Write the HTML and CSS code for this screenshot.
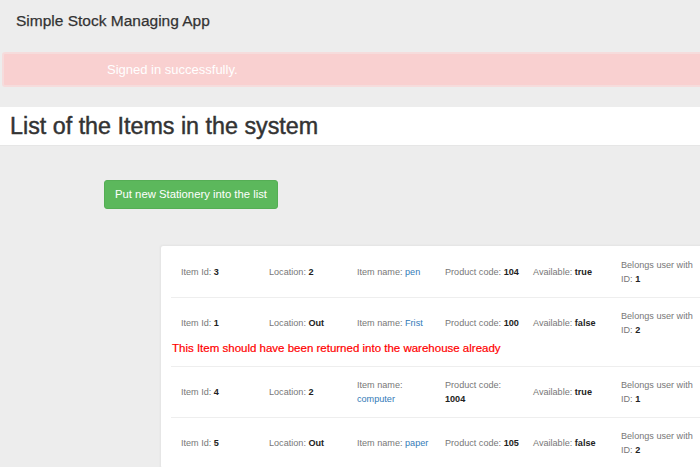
FILE: index.html
```html
<!DOCTYPE html>
<html>
<head>
<meta charset="utf-8">
<title>Simple Stock Managing App</title>
<link rel="stylesheet" href="styles.css">
</head>
<body>
<nav class="navbar"><span class="brand">Simple Stock Managing App</span></nav>
<div class="alert">Signed in successfully.</div>
<div class="title-band"><h1>List of the Items in the system</h1></div>
<div class="actions"><a class="btn">Put new Stationery into the list</a></div>
<div class="card">
  <div class="row">
    <div class="cells">
      <div class="cell"><span class="lbl">Item Id:</span> <b>3</b></div>
      <div class="cell"><span class="lbl">Location:</span> <b>2</b></div>
      <div class="cell"><span class="lbl">Item name:</span> <a class="link">pen</a></div>
      <div class="cell"><span class="lbl">Product code:</span> <b>104</b></div>
      <div class="cell"><span class="lbl">Available:</span> <b>true</b></div>
      <div class="cell"><span class="lbl">Belongs user with</span> <span class="lbl">ID:</span> <b>1</b></div>
    </div>
  </div>
  <div class="row">
    <div class="cells">
      <div class="cell"><span class="lbl">Item Id:</span> <b>1</b></div>
      <div class="cell"><span class="lbl">Location:</span> <b>Out</b></div>
      <div class="cell"><span class="lbl">Item name:</span> <a class="link">Frist</a></div>
      <div class="cell"><span class="lbl">Product code:</span> <b>100</b></div>
      <div class="cell"><span class="lbl">Available:</span> <b>false</b></div>
      <div class="cell"><span class="lbl">Belongs user with</span> <span class="lbl">ID:</span> <b>2</b></div>
    </div>
    <p class="warn">This Item should have been returned into the warehouse already</p>
  </div>
  <div class="row">
    <div class="cells">
      <div class="cell"><span class="lbl">Item Id:</span> <b>4</b></div>
      <div class="cell"><span class="lbl">Location:</span> <b>2</b></div>
      <div class="cell"><span class="lbl">Item name:</span> <a class="link">computer</a></div>
      <div class="cell"><span class="lbl">Product code:</span> <b>1004</b></div>
      <div class="cell"><span class="lbl">Available:</span> <b>true</b></div>
      <div class="cell"><span class="lbl">Belongs user with</span> <span class="lbl">ID:</span> <b>1</b></div>
    </div>
  </div>
  <div class="row">
    <div class="cells">
      <div class="cell"><span class="lbl">Item Id:</span> <b>5</b></div>
      <div class="cell"><span class="lbl">Location:</span> <b>Out</b></div>
      <div class="cell"><span class="lbl">Item name:</span> <a class="link">paper</a></div>
      <div class="cell"><span class="lbl">Product code:</span> <b>105</b></div>
      <div class="cell"><span class="lbl">Available:</span> <b>false</b></div>
      <div class="cell"><span class="lbl">Belongs user with</span> <span class="lbl">ID:</span> <b>2</b></div>
    </div>
  </div>
</div>
</body>
</html>
```
FILE: styles.css
```css
html, body {
  margin: 0;
  padding: 0;
  background: #ededed;
  font-family: "Liberation Sans", Arial, sans-serif;
  color: #333;
  overflow: hidden;
  height: 467px;
}
.navbar {
  height: 42px;
  display: flex;
  align-items: center;
  padding-left: 16px;
}
.brand {
  font-size: 15.5px;
  color: #333;
  -webkit-text-stroke: 0.25px #333;
}
.alert {
  margin: 10px -20px 0 2px;
  height: 31px;
  border: 2px solid #f6dcdc;
  border-radius: 3px;
  background: #f9d0d0;
  color: #ffffff;
  font-size: 13px;
  display: flex;
  align-items: center;
  padding-left: 103px;
}
.title-band {
  margin-top: 20px;
  background: #fff;
  height: 38px;
  display: flex;
  align-items: center;
  border-bottom: 1px solid #e6e6e6;
}
h1 {
  margin: 0 0 0 10px;
  font-size: 23.3px;
  font-weight: 500;
  color: #333;
  -webkit-text-stroke: 0.45px #333;
}
.actions {
  padding: 34px 0 0 104px;
}
.btn {
  display: inline-block;
  background: #5cb85c;
  border: 1px solid #55ae55;
  border-radius: 3px;
  color: #fff;
  font-size: 11.3px;
  height: 27px;
  line-height: 27px;
  padding: 0 10px;
  box-sizing: content-box;
}
.card {
  margin: 36px 0 0 160px;
  width: 620px;
  background: #fff;
  border: 1px solid #e6e6e6;
  border-radius: 3px;
  box-shadow: 0 0 2px rgba(0,0,0,0.05);
  padding: 0 0 0 10px;
  font-size: 9.1px;
  line-height: 14px;
}
.row {
  padding: 11px 0 10px;
  border-top: 1px solid #eee;
}
.row:first-child {
  border-top: none;
  padding-top: 12px;
}
.cells {
  display: grid;
  grid-template-columns: repeat(6, 76px);
  column-gap: 12px;
  align-items: center;
  padding-left: 10px;
  min-height: 28px;
  margin-bottom: 1px;
}
.lbl { color: #777; }
.cell b { color: #222; font-weight: bold; }
.link { color: #337ab7; }
.warn {
  margin: 3px 0 0 1px;
  color: #ff0000;
  font-size: 11.5px;
  line-height: 16px;
  -webkit-text-stroke: 0.2px #ff0000;
}
```
